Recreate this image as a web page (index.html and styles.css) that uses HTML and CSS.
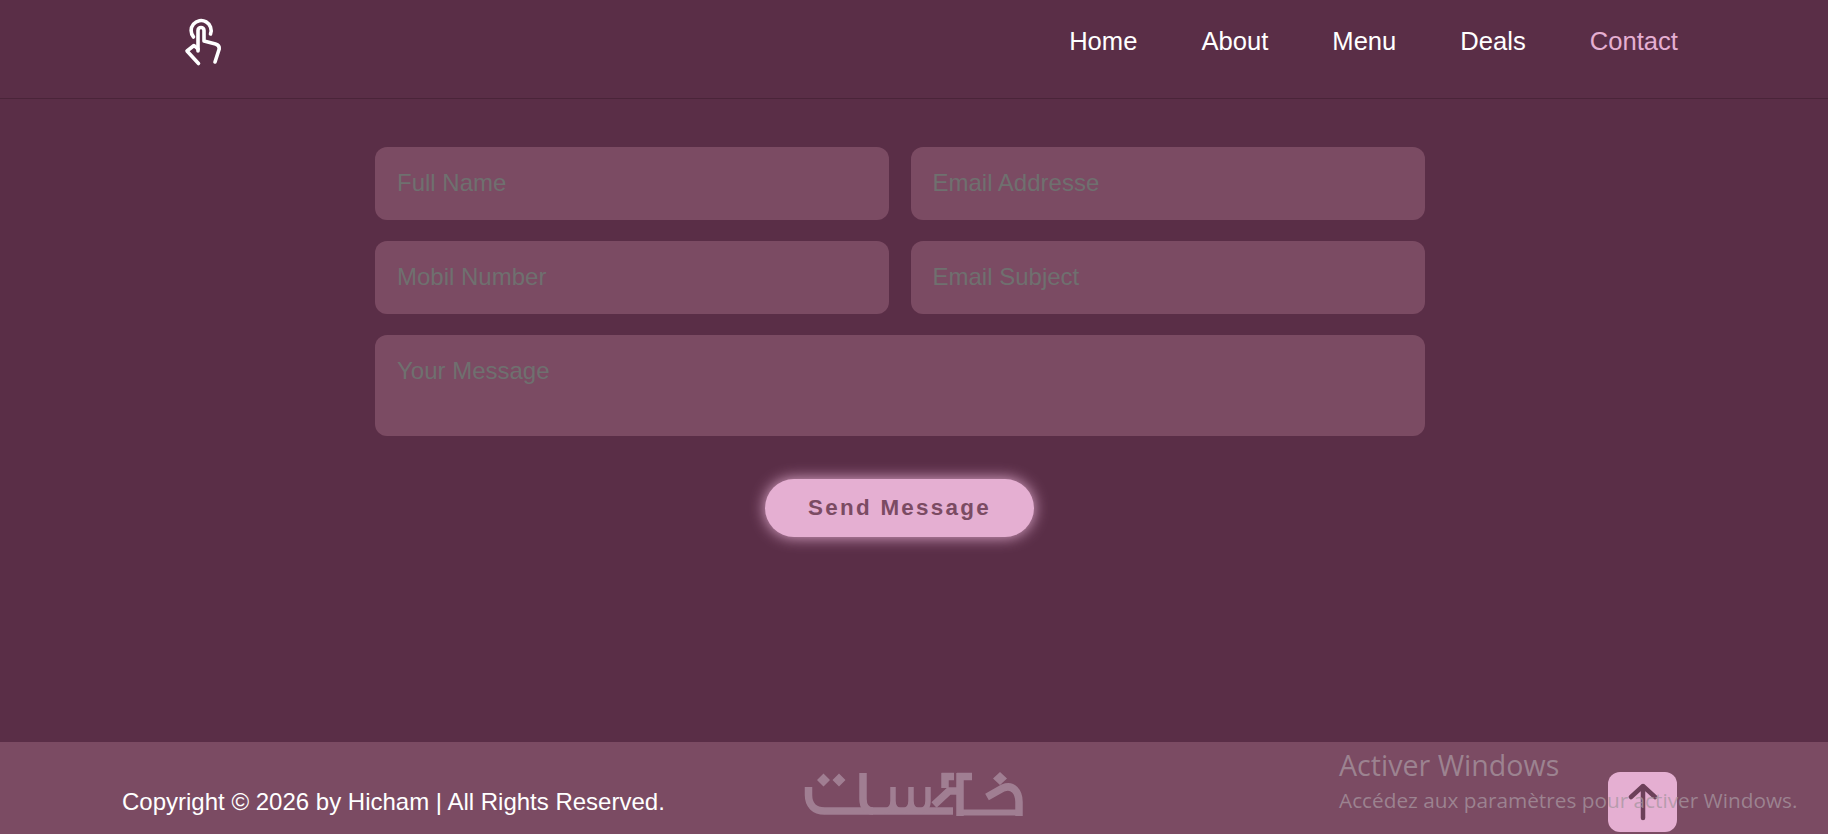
FILE: index.html
```html
<!DOCTYPE html>
<html lang="en">
<head>
<meta charset="utf-8">
<title>Contact</title>
<link rel="stylesheet" href="styles.css">
</head>
<body>
<header class="header">
  <a class="brand" href="#" aria-label="Logo">
    <svg class="brand-icon" viewBox="0 0 50 56" fill="none" stroke="#fff" stroke-width="3.600" stroke-linecap="round" stroke-linejoin="round">
      <path d="M15.500 24A10 10 0 1 1 32.500 21"/>
      <path d="M20 38V17.500a3 3 0 0 1 6 0V28L37.500 31c2.500.7 4 2.500 3.700 5L37 49"/>
      <path d="M20 36L16 32.500L9 38L20.500 50.500"/>
    </svg>
  </a>
  <nav class="nav">
    <a href="#">Home</a>
    <a href="#">About</a>
    <a href="#">Menu</a>
    <a href="#">Deals</a>
    <a href="#" class="active">Contact</a>
  </nav>
</header>
<main class="contact">
  <form class="form">
    <input class="field" type="text" placeholder="Full Name">
    <input class="field" type="email" placeholder="Email Addresse">
    <input class="field" type="text" placeholder="Mobil Number">
    <input class="field" type="text" placeholder="Email Subject">
    <textarea class="field message" placeholder="Your Message"></textarea>
    <button class="send" type="button">Send Message</button>
  </form>
</main>
<footer class="footer">
  <p class="copy">Copyright © 2026 by Hicham | All Rights Reserved.</p>
  <svg class="khamsat" viewBox="0 0 220 44" fill="none" stroke="#a07e92" stroke-width="7.500" role="img" aria-label="خمسات">
    <path d="M5.500 15v8c0 10 6 16 16 16H150"/>
    <path d="M157 40.500H219" stroke-width="6"/>
    <path d="M60 1V27c0 8 4 12 10 12"/>
    <path d="M90 15v14c0 6-3 10-9 10M90 29c0 6 3 10 9 10M108 15v14c0 6-3 10-9 10M108 29c0 6 3 10 9 10M125 15v14c0 6-3 10-9 10" stroke-width="5.500"/>
    <path d="M142 1v15M138.500 4.500h12.500M154 4.500h15M157 1v43M131 33l15-14h11"/>
    <path d="M184 25l16-9c10-4 16 4 16 14v14"/>
    <path d="M20.500 1.500l6.500 6.500-6.500 6.500-6.500-6.500zM36 1.500l6.500 6.500-6.500 6.500-6.500-6.500zM197 0l7 6.500-7 6.500-7-6.500z" fill="#a07e92" stroke="none"/>
  </svg>
  <a class="top" href="#" aria-label="Back to top">
    <svg viewBox="0 0 30 40" fill="none" stroke="#6c4059" stroke-width="4.500" stroke-linecap="round" stroke-linejoin="round"><path d="M15 36V4M3 15L15 4l12 11"/></svg>
  </a>
  <div class="activation">
    <div class="activation-title">Activer Windows</div>
    <div class="activation-text">Accédez aux paramètres pour activer Windows.</div>
  </div>
</footer>
</body>
</html>
```
FILE: styles.css
```css
* { box-sizing: border-box; margin: 0; padding: 0; }
html, body { height: 100%; }
body {
  display: flex;
  flex-direction: column;
  min-height: 834px;
  overflow: hidden;
  background: #5a2e47;
  font-family: "Liberation Sans", Arial, sans-serif;
  color: #fff;
}
.header {
  height: 99px;
  flex: none;
  display: flex;
  align-items: center;
  justify-content: space-between;
  padding: 0 150px 17px 178px;
  border-bottom: 1px solid #4a2439;
}
.brand { display: flex; }
.brand-icon { width: 50px; height: 56px; }
.nav { display: flex; gap: 64px; }
.nav a { color: #fff; text-decoration: none; font-size: 25.6px; line-height: 30px; }
.nav a.active { color: #e5afd2; }
.contact { flex: 1; padding: 48px 403px 0 375px; }
.form { display: grid; grid-template-columns: 514px 514.500px; gap: 21px 21.500px; width: 1050px; }
.field {
  display: block;
  width: 100%;
  height: 73px;
  padding: 0 22px 2px;
  border: 0;
  outline: 0;
  border-radius: 12px;
  background: #7b4b63;
  color: #fff;
  font: 24px "Liberation Sans", Arial, sans-serif;
}
.field::placeholder { color: #6f706f; opacity: 1; }
.message { grid-column: 1 / -1; height: 101px; padding: 22px; resize: none; line-height: 28px; }
.send {
  grid-column: 1 / -1;
  justify-self: center;
  width: 269px;
  height: 58px;
  margin: 22px 0 0 -1px;
  border: 0;
  border-radius: 29px;
  background: #e5afd2;
  color: #7b4b63;
  font: bold 22.4px "Liberation Sans", Arial, sans-serif;
  letter-spacing: 2.3px;
  box-shadow: 0 0 15px #e5afd2;
}
.footer {
  position: relative;
  height: 92px;
  flex: none;
  display: flex;
  align-items: flex-end;
  padding: 0 151px 2px 122px;
  background: #7b4b63;
}
.copy { width: 681px; font-size: 24px; line-height: 28px; margin-bottom: 16px; flex: none; }
.khamsat { width: 220px; height: 44px; flex: none; margin-bottom: 16px; }
.top {
  margin-left: auto;
  width: 69px;
  height: 60px;
  display: flex;
  align-items: center;
  justify-content: center;
  border-radius: 12px;
  background: #e5afd2;
}
.top svg { width: 30px; height: 40px; }
.activation {
  position: absolute;
  left: 1339px;
  top: 5px;
  font-family: "Open Sans", sans-serif;
  color: rgba(167, 150, 160, 0.75);
  white-space: nowrap;
}
.activation-title { font-size: 28.6px; line-height: 36px; }
.activation-text { font-size: 20.77px; line-height: 28px; margin-top: 3px; }
```
